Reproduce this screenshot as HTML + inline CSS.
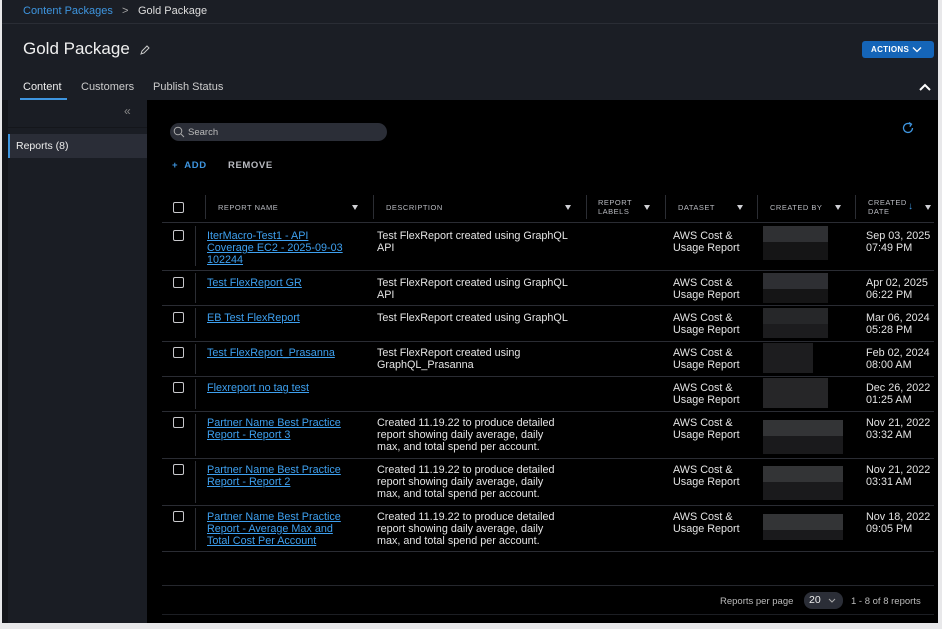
<!DOCTYPE html><html><head><style>
*{box-sizing:border-box;margin:0;padding:0}
body{width:942px;height:629px;background:#e8e8ea;font-family:"Liberation Sans",sans-serif;position:relative;overflow:hidden;color:#e6e6e6}
.a{position:absolute}
.hd{background:#1b1e25}
.lnk{color:#3ea0ef;text-decoration:underline;font-size:10.8px;line-height:12px}
.t{font-size:10.8px;line-height:12px;color:#e4e4e4}
.th{font-size:7.5px;letter-spacing:.5px;color:#b8bac0;line-height:9px}
.cb{width:11px;height:11px;border:1px solid #c8c8cc;border-radius:2px}
.row{border-top:1px solid #2a2c33}
.blur{background:#2e2f33}
.fl{width:0;height:0;border-left:3.5px solid transparent;border-right:3.5px solid transparent;border-top:5px solid #cfd0d4}
.sep{width:1px;background:#2b2d33}
.nm{width:140px}.ds{width:205px;white-space:nowrap}
</style></head><body>
<div class="a hd" style="left:2px;top:0;width:936px;height:100px"></div>
<div class="a" style="left:2px;top:23px;width:936px;height:1px;background:#2a2d35"></div>
<div class="a" style="left:23px;top:5px;font-size:11px;color:#3e95df">Content Packages</div>
<div class="a" style="left:122px;top:5px;font-size:11px;color:#aaa">&gt;</div>
<div class="a" style="left:138px;top:5px;font-size:11px;color:#ddd">Gold Package</div>
<div class="a" style="left:23px;top:39px;font-size:17px;color:#f0f0f0">Gold Package</div>
<svg class="a" style="left:139px;top:44px" width="12" height="12" viewBox="0 0 12 12"><path d="M2 10 L3 7 L8 2 L10 4 L5 9 Z" fill="none" stroke="#ccc" stroke-width="1"/></svg>
<div class="a" style="left:862px;top:41px;width:72px;height:17px;background:#1565b8;border-radius:3px;font-size:8px;font-weight:bold;color:#fff;line-height:17px;padding-left:9px;letter-spacing:.3px">ACTIONS</div>
<svg class="a" style="left:912px;top:46px" width="10" height="7"><path d="M1 1.5 L5 5.5 L9 1.5" fill="none" stroke="#fff" stroke-width="1.3"/></svg>
<div class="a" style="left:23px;top:81px;font-size:11px;color:#eee">Content</div>
<div class="a" style="left:20px;top:98px;width:47px;height:2px;background:#3e95df"></div>
<div class="a" style="left:81px;top:81px;font-size:11px;color:#ccc">Customers</div>
<div class="a" style="left:153px;top:81px;font-size:11px;color:#ccc">Publish Status</div>
<svg class="a" style="left:918px;top:82px" width="14" height="10"><path d="M2 8 L7 3 L12 8" fill="none" stroke="#fff" stroke-width="2"/></svg>
<div class="a" style="left:2px;top:100px;width:6px;height:523px;background:#14161b"></div>
<div class="a" style="left:8px;top:100px;width:139px;height:523px;background:#1a1d24"></div>
<div class="a" style="left:124px;top:104px;font-size:12px;color:#888">&laquo;</div>
<div class="a" style="left:8px;top:127px;width:139px;height:1px;background:#14161b"></div>
<div class="a" style="left:8px;top:134px;width:139px;height:24px;background:#2a2d37;border-left:2px solid #3e95df"></div>
<div class="a" style="left:16px;top:140px;font-size:10.5px;color:#eee">Reports (8)</div>
<div class="a" style="left:147px;top:100px;width:791px;height:523px;background:#000"></div>
<div class="a" style="left:170px;top:123px;width:217px;height:18px;background:#2b2e37;border-radius:9px"></div>
<svg class="a" style="left:173px;top:126px" width="12" height="12"><circle cx="5" cy="5" r="3.8" fill="none" stroke="#aaa" stroke-width="1"/><path d="M8 8 L11 11" stroke="#aaa"/></svg>
<div class="a" style="left:188px;top:127px;font-size:9.5px;color:#bbb">Search</div>
<svg class="a" style="left:901px;top:121px" width="14" height="14"><path d="M11.5 7 A4.5 4.5 0 1 1 9.5 3.2" fill="none" stroke="#3e95df" stroke-width="1.3"/><path d="M8 1.5 L10.5 3.2 L8.8 5.6" fill="none" stroke="#3e95df" stroke-width="1.3"/></svg>
<div class="a" style="left:172px;top:160px;font-size:9.5px;font-weight:bold;color:#3e95df;letter-spacing:.6px">+&nbsp; ADD</div>
<div class="a" style="left:228px;top:160px;font-size:9.5px;font-weight:bold;color:#b8bac0;letter-spacing:.6px">REMOVE</div>
<div class="a cb" style="left:173px;top:202px"></div>
<div class="a sep" style="left:205px;top:195px;height:24px"></div>
<div class="a th" style="left:218px;top:203px">REPORT NAME</div><div class="a fl" style="left:352px;top:205px"></div>
<div class="a sep" style="left:373px;top:195px;height:24px"></div>
<div class="a th" style="left:386px;top:203px">DESCRIPTION</div><div class="a fl" style="left:565px;top:205px"></div>
<div class="a sep" style="left:586px;top:195px;height:24px"></div>
<div class="a th" style="left:598px;top:198px">REPORT<br>LABELS</div><div class="a fl" style="left:644px;top:205px"></div>
<div class="a sep" style="left:665px;top:195px;height:24px"></div>
<div class="a th" style="left:678px;top:203px">DATASET</div><div class="a fl" style="left:737px;top:205px"></div>
<div class="a sep" style="left:757px;top:195px;height:24px"></div>
<div class="a th" style="left:770px;top:203px">CREATED BY</div><div class="a fl" style="left:835px;top:205px"></div>
<div class="a sep" style="left:855px;top:195px;height:24px"></div>
<div class="a th" style="left:868px;top:198px">CREATED<br>DATE</div><div class="a" style="left:908px;top:201px;font-size:10px;color:#3e95df">&#8595;</div><div class="a fl" style="left:925px;top:205px"></div>

<div class="a row" style="left:162px;top:222px;width:772px"></div>
<div class="a cb" style="left:173px;top:230px"></div><div class="a sep" style="left:195px;top:226px;height:40px"></div>
<div class="a lnk nm" style="left:207px;top:230px">IterMacro-Test1 - API Coverage EC2 - 2025-09-03 102244</div>
<div class="a t ds" style="left:377px;top:230px">Test FlexReport created using GraphQL<br>API</div>
<div class="a t" style="left:673px;top:230px">AWS Cost &amp;<br>Usage Report</div>
<div class="a" style="left:763px;top:226px;width:65px;height:16px;background:#2f3033"></div><div class="a" style="left:763px;top:242px;width:65px;height:18px;background:#151516"></div>
<div class="a t" style="left:866px;top:230px">Sep 03, 2025<br>07:49 PM</div>

<div class="a row" style="left:162px;top:270px;width:772px"></div>
<div class="a cb" style="left:173px;top:277px"></div><div class="a sep" style="left:195px;top:273px;height:30px"></div>
<div class="a lnk" style="left:207px;top:277px">Test FlexReport GR</div>
<div class="a t ds" style="left:377px;top:277px">Test FlexReport created using GraphQL<br>API</div>
<div class="a t" style="left:673px;top:277px">AWS Cost &amp;<br>Usage Report</div>
<div class="a blur" style="left:763px;top:273px;width:65px;height:16px"></div><div class="a" style="left:763px;top:289px;width:65px;height:14px;background:#151516"></div>
<div class="a t" style="left:866px;top:277px">Apr 02, 2025<br>06:22 PM</div>

<div class="a row" style="left:162px;top:305px;width:772px"></div>
<div class="a cb" style="left:173px;top:312px"></div><div class="a sep" style="left:195px;top:308px;height:30px"></div>
<div class="a lnk" style="left:207px;top:312px">EB Test FlexReport</div>
<div class="a t ds" style="left:377px;top:312px">Test FlexReport created using GraphQL</div>
<div class="a t" style="left:673px;top:312px">AWS Cost &amp;<br>Usage Report</div>
<div class="a" style="left:763px;top:308px;width:65px;height:16px;background:#262729"></div><div class="a" style="left:763px;top:324px;width:65px;height:14px;background:#1c1c1e"></div>
<div class="a t" style="left:866px;top:312px">Mar 06, 2024<br>05:28 PM</div>

<div class="a row" style="left:162px;top:341px;width:772px"></div>
<div class="a cb" style="left:173px;top:347px"></div><div class="a sep" style="left:195px;top:344px;height:30px"></div>
<div class="a lnk" style="left:207px;top:347px">Test FlexReport_Prasanna</div>
<div class="a t ds" style="left:377px;top:347px">Test FlexReport created using<br>GraphQL_Prasanna</div>
<div class="a t" style="left:673px;top:347px">AWS Cost &amp;<br>Usage Report</div>
<div class="a" style="left:763px;top:343px;width:50px;height:30px;background:#1d1d1f"></div>
<div class="a t" style="left:866px;top:347px">Feb 02, 2024<br>08:00 AM</div>

<div class="a row" style="left:162px;top:376px;width:772px"></div>
<div class="a cb" style="left:173px;top:382px"></div><div class="a sep" style="left:195px;top:379px;height:30px"></div>
<div class="a lnk" style="left:207px;top:382px">Flexreport no tag test</div>
<div class="a t" style="left:673px;top:382px">AWS Cost &amp;<br>Usage Report</div>
<div class="a" style="left:763px;top:378px;width:65px;height:30px;background:#262628"></div>
<div class="a t" style="left:866px;top:382px">Dec 26, 2022<br>01:25 AM</div>

<div class="a row" style="left:162px;top:411px;width:772px"></div>
<div class="a cb" style="left:173px;top:417px"></div><div class="a sep" style="left:195px;top:414px;height:42px"></div>
<div class="a lnk nm" style="left:207px;top:417px">Partner Name Best Practice Report - Report 3</div>
<div class="a t ds" style="left:377px;top:417px">Created 11.19.22 to produce detailed<br>report showing daily average, daily<br>max, and total spend per account.</div>
<div class="a t" style="left:673px;top:417px">AWS Cost &amp;<br>Usage Report</div>
<div class="a" style="left:763px;top:420px;width:80px;height:16px;background:#333436"></div><div class="a" style="left:763px;top:436px;width:80px;height:18px;background:#1a1a1c"></div>
<div class="a t" style="left:866px;top:417px">Nov 21, 2022<br>03:32 AM</div>

<div class="a row" style="left:162px;top:458px;width:772px"></div>
<div class="a cb" style="left:173px;top:464px"></div><div class="a sep" style="left:195px;top:461px;height:42px"></div>
<div class="a lnk nm" style="left:207px;top:464px">Partner Name Best Practice Report - Report 2</div>
<div class="a t ds" style="left:377px;top:464px">Created 11.19.22 to produce detailed<br>report showing daily average, daily<br>max, and total spend per account.</div>
<div class="a t" style="left:673px;top:464px">AWS Cost &amp;<br>Usage Report</div>
<div class="a" style="left:763px;top:466px;width:80px;height:16px;background:#333436"></div><div class="a" style="left:763px;top:482px;width:80px;height:18px;background:#1a1a1c"></div>
<div class="a t" style="left:866px;top:464px">Nov 21, 2022<br>03:31 AM</div>

<div class="a row" style="left:162px;top:505px;width:772px"></div>
<div class="a cb" style="left:173px;top:511px"></div><div class="a sep" style="left:195px;top:508px;height:42px"></div>
<div class="a lnk nm" style="left:207px;top:511px">Partner Name Best Practice Report - Average Max and Total Cost Per Account</div>
<div class="a t ds" style="left:377px;top:511px">Created 11.19.22 to produce detailed<br>report showing daily average, daily<br>max, and total spend per account.</div>
<div class="a t" style="left:673px;top:511px">AWS Cost &amp;<br>Usage Report</div>
<div class="a" style="left:763px;top:514px;width:80px;height:16px;background:#333436"></div><div class="a" style="left:763px;top:530px;width:80px;height:10px;background:#1a1a1c"></div>
<div class="a t" style="left:866px;top:511px">Nov 18, 2022<br>09:05 PM</div>
<div class="a row" style="left:162px;top:551px;width:772px"></div>

<div class="a" style="left:162px;top:585px;width:772px;height:1px;background:#25272d"></div>
<div class="a" style="left:720px;top:596px;font-size:9.5px;color:#bbb">Reports per page</div>
<div class="a" style="left:804px;top:592px;width:39px;height:17px;background:#2b2e37;border-radius:8px;font-size:10.5px;color:#eee;line-height:17px;padding-left:5px">20</div>
<svg class="a" style="left:828px;top:598px" width="8" height="6"><path d="M1 1 L4 4 L7 1" fill="none" stroke="#aaa" stroke-width="1"/></svg>
<div class="a" style="left:851px;top:596px;font-size:9.5px;color:#bbb">1 - 8 of 8 reports</div>
<div class="a" style="left:162px;top:614px;width:772px;height:1px;background:#1c1e23"></div>
</body></html>
